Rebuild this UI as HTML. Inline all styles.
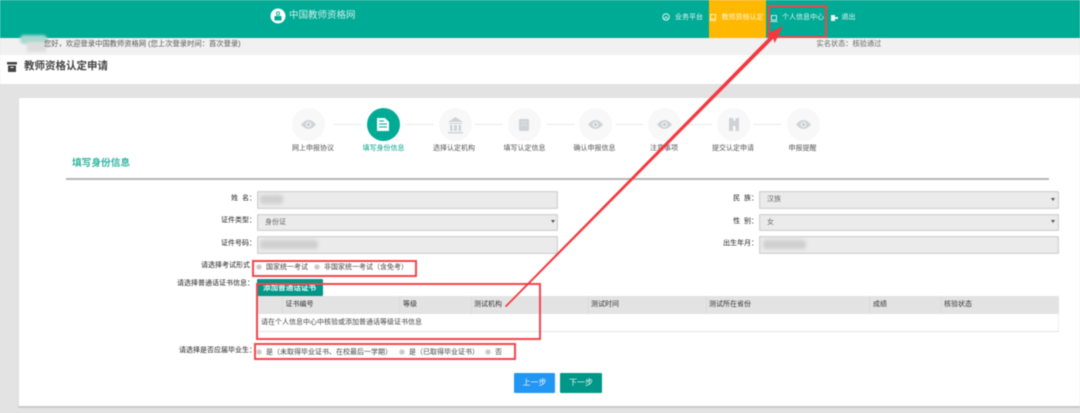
<!DOCTYPE html>
<html lang="zh"><head><meta charset="utf-8"><style>
html,body{margin:0;padding:0;width:1080px;height:413px;overflow:hidden;background:#e3e3e3}
#p{position:relative;width:1080px;height:413px;overflow:hidden;font-family:"Liberation Sans","Noto Sans CJK SC",sans-serif;filter:blur(.4px)}
#p div{position:absolute;white-space:nowrap}
.t{font-size:7px;line-height:10px;color:#444}
.r{font-size:7px;line-height:10px;color:#222;text-align:right}
.i{background:#ebebeb;border:1px solid #d2d2d2;box-sizing:border-box;border-radius:1px;box-shadow:inset 0 0 1px #bbb}
.c{width:33px;height:33px;border-radius:50%;background:#f8f8f8}
.s{font-size:7px;line-height:10px;color:#555;text-align:center;width:70px}
.d{height:0;width:27px;border-top:1px dotted #d4d4d4;top:124px}
.b{background:#d0d0d0;filter:blur(1.5px);border-radius:3px}
.o{width:4px;height:4px;border-radius:50%;background:#c8c8c8;border:1px solid #ddd}
.red{border:2px solid #f3454a;box-sizing:border-box}
.tri{width:0;height:0;border-left:2px solid transparent;border-right:2px solid transparent;border-top:3px solid #555}
.v{width:1px;height:18px;top:296px;background:#dadada}
</style></head><body><div id="p">
<div style="left:0;top:0;width:1080px;height:38px;background:#00ab96"></div>
<div style="left:0;top:38px;width:1080px;height:17px;background:#f1f1f1"></div>
<div style="left:0;top:55px;width:1080px;height:29px;background:#fff"></div>
<div style="left:18px;top:98px;width:1062px;height:310px;background:#fff;border-bottom:2px solid #c9c9c9;border-left:1px solid #ddd;box-sizing:border-box"></div>

<svg style="position:absolute;left:270px;top:8px" width="16" height="16" viewBox="0 0 16 16"><circle cx="8" cy="8" r="7.500" fill="#fff"/><rect x="4.500" y="8" width="7" height="4.500" fill="#00ab96"/><circle cx="8" cy="5.500" r="1.600" fill="none" stroke="#00ab96"/></svg>
<div style="left:289px;top:10px;font-size:9.500px;line-height:12px;color:#cdeee9">中国教师资格网</div>

<div style="left:709px;top:0;width:57px;height:38px;background:#ffb800"></div>
<svg style="position:absolute;left:662px;top:13px" width="8" height="8" viewBox="0 0 8 8"><circle cx="4" cy="4" r="3.200" fill="none" stroke="#d8f3ef"/><path d="M2 6.500L4 3.500L6 6.500" fill="none" stroke="#d8f3ef" stroke-width=".8"/></svg>
<div class="t" style="left:675px;top:12.500px;color:#e4f7f4">业务平台</div>
<svg style="position:absolute;left:709px;top:14px" width="8" height="7" viewBox="0 0 8 7"><path d="M1.500 .5H6.500V5H1.500ZM.5 6.500H7.500" fill="none" stroke="#fff" stroke-width=".8"/></svg>
<div class="t" style="left:721.500px;top:12.500px;color:#fff6dc">教师资格认定</div>
<svg style="position:absolute;left:769.500px;top:14.500px" width="8" height="7" viewBox="0 0 8 7"><path d="M1.500 .5H6.500V5H1.500ZM.5 6.500H7.500" fill="none" stroke="#fff" stroke-width=".8"/></svg>
<div class="t" style="left:782px;top:12.500px;color:#e4f7f4">个人信息中心</div>
<svg style="position:absolute;left:830px;top:13.500px" width="8" height="8" viewBox="0 0 8 8"><path d="M1 1H5V3H8V5H5V7H1Z" fill="#e4f7f4"/></svg>
<div class="t" style="left:841.500px;top:12.500px;color:#e4f7f4">退出</div>

<div style="left:20px;top:35px;width:27px;height:9px;background:#a8d8d0;filter:blur(1.200px);border-radius:4px"></div>
<div style="left:27px;top:42px;width:19px;height:10px;background:#ddd;filter:blur(1.200px)"></div>
<div class="t" style="left:44px;top:39px;color:#555;font-size:7.300px">您好，欢迎登录中国教师资格网 (您上次登录时间：首次登录)</div>
<div class="t" style="left:816.500px;top:39px;color:#666;font-size:7.200px">实名状态：核验通过</div>

<svg style="position:absolute;left:7px;top:62px" width="10" height="10" viewBox="0 0 10 10"><path d="M0 0H10V2.500H0ZM1 3.500H9V10H1Z" fill="#444"/><rect x="3.500" y="5" width="3" height="1" fill="#fff"/></svg>
<div style="left:24px;top:59px;font-size:10.500px;line-height:14px;font-weight:bold;color:#444">教师资格认定申请</div>

<div class="c" style="left:292px;top:108px"></div>
<div class="c" style="left:367px;top:108px;background:#00ab96"></div>
<div class="c" style="left:439px;top:108px"></div>
<div class="c" style="left:508px;top:108px"></div>
<div class="c" style="left:579px;top:108px"></div>
<div class="c" style="left:648px;top:108px"></div>
<div class="c" style="left:717px;top:108px"></div>
<div class="c" style="left:787px;top:108px"></div>
<div class="d" style="left:334px"></div><div class="d" style="left:406px"></div><div class="d" style="left:475px"></div><div class="d" style="left:547px"></div><div class="d" style="left:616px"></div><div class="d" style="left:688px;width:24px"></div><div class="d" style="left:754px"></div>

<svg style="position:absolute;left:0;top:0" width="1080" height="413" viewBox="0 0 1080 413">
<defs><g id="e"><path d="M-7.500 0Q0 -9 7.500 0Q0 9 -7.500 0Z" fill="#cfd3d6"/><circle r="2.800" fill="#f0f0f0"/><circle r="1.500" fill="#c4c8cb"/></g></defs>
<use href="#e" x="308.500" y="124.500"/><use href="#e" x="595.500" y="124.500"/><use href="#e" x="664.500" y="124.500"/><use href="#e" x="803.500" y="124.500"/>
<path d="M377 118H385L389 122V131H377Z" fill="#fff"/><path d="M379 121H384M379 124H387M379 127H387" stroke="#00ab96"/>
<path d="M455.500 117L448 122H463ZM449 123H462V124H449ZM450 125H452.500V131H450ZM454 125H457V131H454ZM458.500 125H461V131H458.500ZM448 132H463V133.500H448Z" fill="#cfd3d6"/>
<rect x="519" y="119" width="10" height="12" rx="1.500" fill="#cfd3d6"/><path d="M521 122H527M521 125H527" stroke="#e6e6e6" stroke-width=".8"/>
<path d="M729 118H733L734 121H735L736 118H739V131H729Z" fill="#cfd3d6"/><rect x="733" y="126" width="2.500" height="5" fill="#f8f8f8"/>
</svg>

<div class="s" style="left:278px;top:144px">网上申报协议</div>
<div class="s" style="left:348.500px;top:144px;color:#00a28d">填写身份信息</div>
<div class="s" style="left:419px;top:144px">选择认定机构</div>
<div class="s" style="left:489.500px;top:144px">填写认定信息</div>
<div class="s" style="left:559.500px;top:144px">确认申报信息</div>
<div class="s" style="left:629px;top:144px">注意事项</div>
<div class="s" style="left:698px;top:144px">提交认定申请</div>
<div class="s" style="left:767.500px;top:144px">申报提醒</div>

<div style="left:72px;top:157px;font-size:9.700px;line-height:13px;font-weight:bold;color:#2fb5a0">填写身份信息</div>
<div style="left:66px;top:178px;width:983px;height:1.500px;background:#b5b5b5"></div>

<div class="i" style="left:257px;top:191px;width:301px;height:18px"></div>
<div class="i" style="left:257px;top:213.500px;width:301px;height:17.500px"></div>
<div class="i" style="left:257px;top:236px;width:301px;height:18px"></div>
<div class="i" style="left:759px;top:191px;width:300px;height:18px"></div>
<div class="i" style="left:759px;top:213.500px;width:300px;height:17.500px"></div>
<div class="i" style="left:759px;top:236px;width:300px;height:18px"></div>
<div class="tri" style="left:551px;top:220px"></div><div class="tri" style="left:1051px;top:198px"></div><div class="tri" style="left:1051px;top:220px"></div>
<div class="b" style="left:260px;top:195px;width:23px;height:9px"></div>
<div class="b" style="left:260px;top:239.500px;width:58px;height:9px"></div>
<div class="b" style="left:763px;top:239.500px;width:43px;height:9px"></div>
<div class="t" style="left:265px;top:218px;color:#666">身份证</div>
<div class="t" style="left:767px;top:195px;color:#666">汉族</div>
<div class="t" style="left:767px;top:218px;color:#666">女</div>

<div class="r" style="left:196px;top:194px;width:60px">姓&nbsp;&nbsp;名：</div>
<div class="r" style="left:196px;top:216px;width:60px">证件类型：</div>
<div class="r" style="left:196px;top:239px;width:60px">证件号码：</div>
<div class="r" style="left:696px;top:194px;width:62px">民&nbsp;&nbsp;族：</div>
<div class="r" style="left:696px;top:216.500px;width:62px">性&nbsp;&nbsp;别：</div>
<div class="r" style="left:696px;top:239px;width:62px">出生年月：</div>
<div class="r" style="left:190px;top:261px;width:60px">请选择考试形式</div>
<div class="r" style="left:165px;top:279px;width:89px">请选择普通话证书信息：</div>
<div class="r" style="left:163px;top:346px;width:93px">请选择是否应届毕业生：</div>

<div class="o" style="left:256px;top:264px"></div><div class="t" style="left:266px;top:263px">国家统一考试</div>
<div class="o" style="left:314px;top:264px"></div><div class="t" style="left:324px;top:263px">非国家统一考试（含免考）</div>

<div style="left:256.500px;top:279px;width:66.500px;height:17px;background:#009688;border-radius:1px"></div>
<div style="left:263px;top:282.500px;font-size:7.600px;line-height:10px;font-weight:bold;color:#e8f7f5">添加普通话证书</div>

<div style="left:257px;top:296px;width:802px;height:18px;background:#e3e3e3"></div>
<div class="v" style="left:281.500px"></div><div class="v" style="left:399px"></div><div class="v" style="left:470.500px"></div><div class="v" style="left:587.500px"></div><div class="v" style="left:706px"></div><div class="v" style="left:869px"></div><div class="v" style="left:940.500px"></div>
<div style="left:257px;top:314px;width:802px;height:18px;background:#fff;border-bottom:1px solid #e3e3e3;border-right:1px solid #eee;box-sizing:border-box"></div>
<div class="t" style="left:285.500px;top:300px;color:#333">证书编号</div>
<div class="t" style="left:403px;top:300px;color:#333">等级</div>
<div class="t" style="left:474px;top:300px;color:#333">测试机构</div>
<div class="t" style="left:591px;top:300px;color:#333">测试时间</div>
<div class="t" style="left:709px;top:300px;color:#333">测试所在省份</div>
<div class="t" style="left:873px;top:300px;color:#333">成绩</div>
<div class="t" style="left:944px;top:300px;color:#333">核验状态</div>
<div class="t" style="left:261px;top:318px">请在个人信息中心中核验或添加普通话等级证书信息</div>

<div class="o" style="left:256px;top:349px"></div><div class="t" style="left:266px;top:347.500px">是（未取得毕业证书、在校最后一学期）</div>
<div class="o" style="left:399px;top:349px"></div><div class="t" style="left:409px;top:347.500px">是（已取得毕业证书）</div>
<div class="o" style="left:484.500px;top:349px"></div><div class="t" style="left:495px;top:347.500px">否</div>

<div style="left:514px;top:373px;width:41px;height:20px;background:#2196f3;border-radius:1px;color:#e8f4fe;font-size:8px;line-height:20px;text-align:center">上一步</div>
<div style="left:560px;top:373px;width:42px;height:20px;background:#009688;border-radius:1px;color:#e8f7f5;font-size:8px;line-height:20px;text-align:center">下一步</div>

<div class="red" style="left:768px;top:5px;width:59px;height:32.500px"></div>
<div class="red" style="left:252px;top:260px;width:165px;height:17px"></div>
<div class="red" style="left:256px;top:282.500px;width:284.500px;height:57px"></div>
<div class="red" style="left:254px;top:342.500px;width:262px;height:17.500px"></div>
<svg style="position:absolute;left:0;top:0" width="1080" height="413" viewBox="0 0 1080 413">
<path d="M505 306L770.400 36L766.100 34.600L783 26L774.700 43L773.200 38.800L506.200 307.200Z" fill="#f5383e"/>
</svg>
</div></body></html>
